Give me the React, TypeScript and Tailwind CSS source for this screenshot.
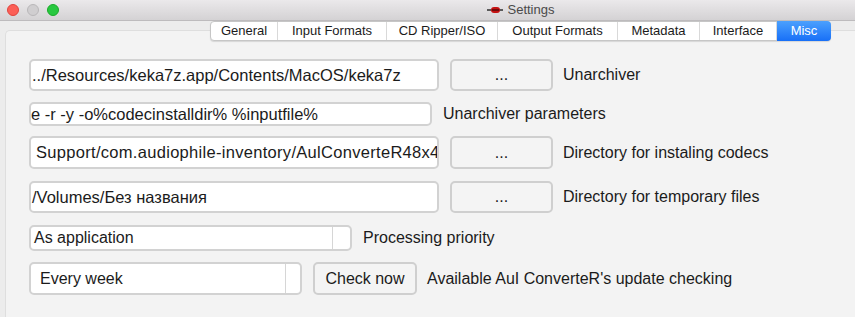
import React from "react";

const tabs = [
  { id: "general", label: "General", w: "w-[67px]" },
  { id: "input", label: "Input Formats", w: "w-[109px]" },
  { id: "cd", label: "CD Ripper/ISO", w: "w-[111px]" },
  { id: "output", label: "Output Formats", w: "w-[120px]" },
  { id: "meta", label: "Metadata", w: "w-[82px]" },
  { id: "iface", label: "Interface", w: "w-[77px]" },
];

function Field({ value, className }: { value: string; className: string }) {
  return (
    <div
      className={`flex items-center bg-white border-2 border-[#d2d2d2] rounded-[5px] overflow-hidden whitespace-nowrap text-[16.5px] text-[#1b1b1b] ${className}`}
    >
      {value}
    </div>
  );
}

function Button({ label, className }: { label: string; className: string }) {
  return (
    <div
      className={`flex items-center justify-center bg-[#f4f4f4] border-2 border-[#cfcfcf] rounded-[5px] text-[16px] text-[#1b1b1b] ${className}`}
    >
      {label}
    </div>
  );
}

function Select({ value, className, pad, side }: { value: string; className: string; pad: string; side: string }) {
  return (
    <div className={`flex bg-white border-2 border-[#d2d2d2] rounded-[5px] text-[16px] text-[#1b1b1b] ${className}`}>
      <div className={`flex-1 flex items-center ${pad}`}>{value}</div>
      <div className={`border-l border-[#d6d6d6] ${side}`} />
    </div>
  );
}

export default function App() {
  return (
    <div className="w-[855px] h-[317px] overflow-hidden bg-[#ececec] font-['Liberation_Sans',Arial,sans-serif]">
      {/* title bar */}
      <div className="relative h-[21px] flex items-center justify-center bg-gradient-to-b from-[#ebe9eb] to-[#d4d2d4] border-b border-[#bdbbbd]">
        <div className="absolute left-[7px] top-[4px] flex gap-[8px]">
          <div className="w-[12px] h-[12px] rounded-full bg-[#fc5f57] border border-[#e0443e]" />
          <div className="w-[12px] h-[12px] rounded-full bg-[#d0ced0] border border-[#b9b7b9]" />
          <div className="w-[12px] h-[12px] rounded-full bg-[#28c840] border border-[#1aab29]" />
        </div>
        <div className="flex items-center gap-[5px] ml-[186px] text-[13px] text-[#4a4a4a]">
          <svg width="16" height="8" viewBox="0 0 16 8">
            <line x1="0" y1="4" x2="16" y2="4" stroke="#222" strokeWidth="1.4" />
            <rect x="4" y="1" width="9" height="6" rx="3" fill="#c41212" />
            <rect x="5" y="3.4" width="7" height="1.2" fill="#3a0505" />
          </svg>
          <span>Settings</span>
        </div>
      </div>

      {/* tabs */}
      <div className="relative z-10 ml-[210px] flex h-[20px] w-fit bg-white border border-[#c6c6c6] rounded-[4px] shadow-[0_1px_1px_rgba(0,0,0,0.12)] text-[13px] text-[#1b1b1b]">
        {tabs.map((t) => (
          <div key={t.id} className={`${t.w} flex items-center justify-center border-r border-[#d9d9d9]`}>
            {t.label}
          </div>
        ))}
        <div className="w-[54px] -my-px -mr-px flex items-center justify-center rounded-r-[4px] bg-gradient-to-b from-[#4ba0fd] to-[#176ff7] text-white">
          Misc
        </div>
      </div>

      {/* panel */}
      <div className="-mt-[11px] ml-[5px] h-[300px] bg-[#f3f3f3] border border-[#dedede] border-r-0 rounded-tl-[5px] pt-[28px] pl-[23px] text-[16px] text-[#1b1b1b]">
        <div className="flex items-center h-[32px]">
          <Field value="../Resources/keka7z.app/Contents/MacOS/keka7z" className="w-[410px] h-[32px] pl-[1px]" />
          <Button label="..." className="ml-[11px] w-[103px] h-[32px]" />
          <span className="ml-[10px]">Unarchiver</span>
        </div>

        <div className="flex items-center h-[24px] mt-[11px]">
          <Field value="e -r -y -o%codecinstalldir% %inputfile%" className="w-[403px] h-[24px] pl-0" />
          <span className="ml-[11px]">Unarchiver parameters</span>
        </div>

        <div className="flex items-center h-[33px] mt-[10px]">
          <Field
            value="Support/com.audiophile-inventory/AulConverteR48x44"
            className="w-[410px] h-[33px] pl-[5px] tracking-[0.3px]"
          />
          <Button label="..." className="ml-[11px] w-[103px] h-[33px]" />
          <span className="ml-[10px]">Directory for instaling codecs</span>
        </div>

        <div className="flex items-center h-[32px] mt-[12px]">
          <Field value="/Volumes/Без названия" className="w-[410px] h-[32px] pl-[1px]" />
          <Button label="..." className="ml-[11px] w-[103px] h-[32px]" />
          <span className="ml-[10px]">Directory for temporary files</span>
        </div>

        <div className="flex items-center h-[26px] mt-[12px]">
          <Select value="As application" className="w-[323px] h-[26px]" pad="pl-[3px]" side="w-[18px]" />
          <span className="ml-[11px]">Processing priority</span>
        </div>

        <div className="flex items-center h-[33px] mt-[11px]">
          <Select value="Every week" className="w-[273px] h-[33px]" pad="pl-[9px]" side="w-[15px]" />
          <Button label="Check now" className="ml-[11px] w-[104px] h-[33px]" />
          <span className="ml-[10px]">Available AuI ConverteR's update checking</span>
        </div>
      </div>
    </div>
  );
}
